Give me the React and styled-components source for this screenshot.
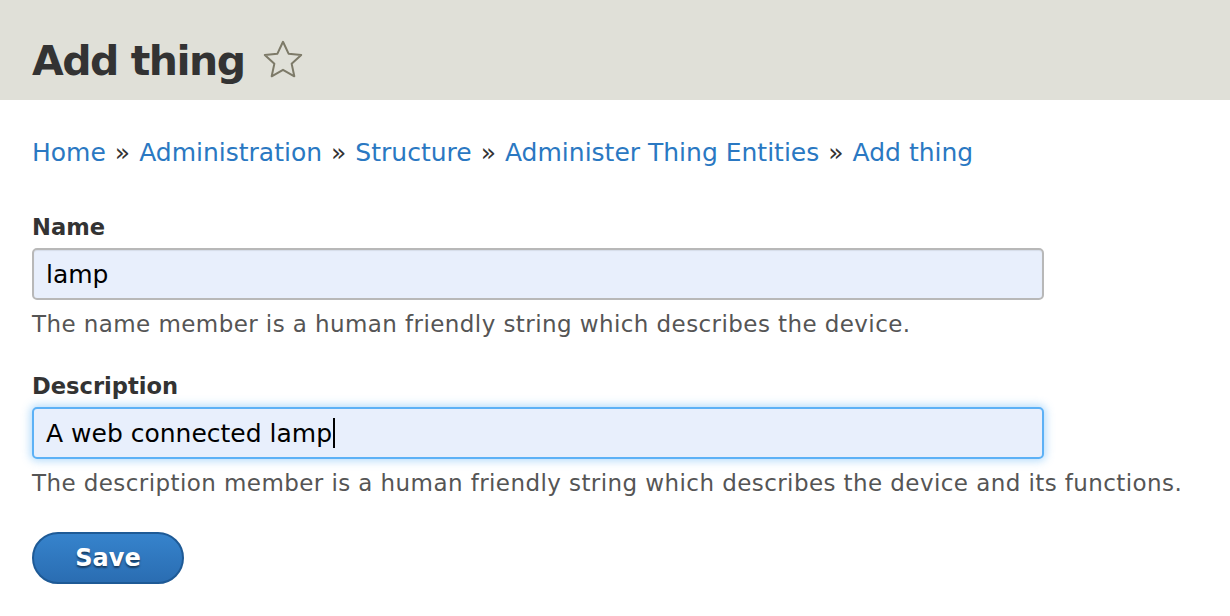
import React from "react";
import styled, { createGlobalStyle } from "styled-components";

const GlobalStyle = createGlobalStyle`
  html, body {
    margin: 0;
    padding: 0;
    background: #ffffff;
  }
  body {
    font-family: "DejaVu Sans", "Open Sans", sans-serif;
    color: #333333;
  }
`;

const Header = styled.header`
  background: #e0e0d8;
  height: 100px;
  padding: 0 32px;
  display: flex;
  align-items: center;
  gap: 15px;
`;

const Title = styled.h1`
  margin: 0;
  font-size: 41px;
  font-weight: 700;
  letter-spacing: -1.5px;
  color: #333333;
  padding-top: 22px;
  line-height: 1;
`;

const Star = styled.svg`
  width: 46px;
  height: 46px;
  margin-top: 20px;
`;

const Main = styled.main`
  padding: 34px 32px 0;
`;

const Breadcrumb = styled.nav`
  font-size: 25px;
  line-height: 38px;
  color: #333333;
  display: flex;
  flex-wrap: wrap;
`;

const Crumb = styled.a`
  color: #2a78c2;
  text-decoration: none;
`;

const Sep = styled.span`
  padding: 0 9px;
`;

const Form = styled.form`
  margin-top: 40px;
  display: flex;
  flex-direction: column;
`;

const Item = styled.div`
  display: flex;
  flex-direction: column;
  margin-bottom: 30px;
`;

const Label = styled.label`
  font-size: 22.6px;
  font-weight: 700;
  line-height: 30px;
  color: #333333;
  margin-bottom: 6px;
`;

const FieldBox = styled.div`
  box-sizing: border-box;
  width: 1012px;
  height: 52px;
  background: #e8effc;
  border: 2px solid ${(p) => (p.$focused ? "#5cb1f6" : "#b8b8b8")};
  border-radius: 5px;
  box-shadow: ${(p) =>
    p.$focused ? "0 0 8px 2px rgba(92, 177, 246, 0.45)" : "inset 0 1px 1px rgba(0,0,0,0.08)"};
  padding: 0 12px;
  display: flex;
  align-items: center;
  font-size: 25px;
  color: #000000;
`;

const Caret = styled.span`
  display: inline-block;
  width: 2px;
  height: 30px;
  background: #000000;
  margin-left: 1px;
`;

const Help = styled.div`
  font-size: 23px;
  letter-spacing: 0.42px;
  line-height: 34px;
  color: #555555;
  margin-top: 7px;
  white-space: nowrap;
`;

const SaveButton = styled.button`
  box-sizing: border-box;
  width: 152px;
  height: 52px;
  margin-top: 2px;
  border-radius: 26px;
  border: 2px solid #1e5a96;
  background: linear-gradient(#3683cc, #2a6db2);
  color: #ffffff;
  font-family: "DejaVu Sans", "Open Sans", sans-serif;
  font-size: 24px;
  font-weight: 700;
  text-shadow: 0 2px 2px rgba(0, 0, 0, 0.5);
  cursor: pointer;
`;

export default function App() {
  return (
    <>
      <GlobalStyle />
      <Header>
        <Title>Add thing</Title>
        <Star viewBox="0 0 24 24">
          <path
            d="M12 2.5l2.9 6.2 6.6.7-5 4.5 1.4 6.6L12 17.1l-5.9 3.4 1.4-6.6-5-4.5 6.6-.7z"
            fill="none"
            stroke="#7d7a68"
            strokeWidth="1.05"
            strokeLinejoin="round"
          />
        </Star>
      </Header>
      <Main>
        <Breadcrumb>
          <Crumb href="#">Home</Crumb>
          <Sep>»</Sep>
          <Crumb href="#">Administration</Crumb>
          <Sep>»</Sep>
          <Crumb href="#">Structure</Crumb>
          <Sep>»</Sep>
          <Crumb href="#">Administer Thing Entities</Crumb>
          <Sep>»</Sep>
          <Crumb href="#">Add thing</Crumb>
        </Breadcrumb>
        <Form onSubmit={(e) => e.preventDefault()}>
          <Item>
            <Label>Name</Label>
            <FieldBox>lamp</FieldBox>
            <Help>The name member is a human friendly string which describes the device.</Help>
          </Item>
          <Item>
            <Label>Description</Label>
            <FieldBox $focused>
              A web connected lamp
              <Caret />
            </FieldBox>
            <Help>
              The description member is a human friendly string which describes the device and its
              functions.
            </Help>
          </Item>
          <div>
            <SaveButton type="submit">Save</SaveButton>
          </div>
        </Form>
      </Main>
    </>
  );
}
